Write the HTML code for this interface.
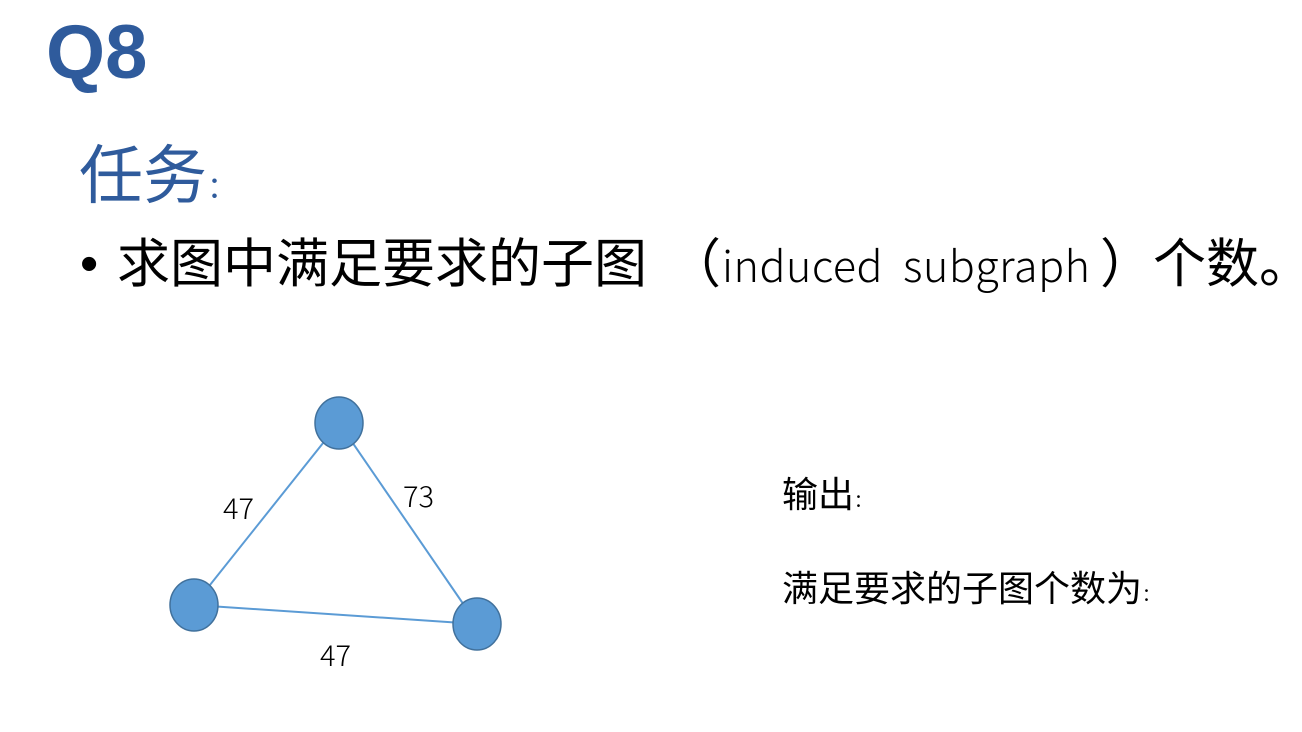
<!DOCTYPE html>
<html><head><meta charset="utf-8"><style>
body{margin:0;width:1302px;height:732px;background:#fff;position:relative;overflow:hidden;font-family:"Liberation Sans","Noto Sans CJK SC",sans-serif}
.a{position:absolute;white-space:nowrap;line-height:1}
</style></head><body>
<div class="a" style="left:46px;top:15px;font-size:76px;font-weight:bold;color:#2f5b9c;letter-spacing:0px">Q8</div>
<div class="a" style="left:79px;top:144px;font-size:64px;color:#2f5b9c">任务<span style="font-size:30px">：</span></div>
<div class="a" style="left:80px;top:238px;font-size:52px;color:#000">•</div>
<div class="a" style="left:117px;top:238px;font-size:53px;color:#000">求图中满足要求的子图</div>
<div class="a" style="left:668px;top:238px;font-size:53px;color:#000">（</div>
<div class="a" style="left:722px;top:243px;font-size:43px;color:#000;letter-spacing:0.5px;font-family:'Noto Sans CJK SC','Liberation Sans',sans-serif;font-weight:300">induced&nbsp; subgraph</div>
<div class="a" style="left:1100px;top:238px;font-size:53px;color:#000">）个数。</div>
<svg class="a" style="left:0;top:0" width="1302" height="732">
<g stroke="#5b9bd5" stroke-width="2">
<line x1="339" y1="423" x2="194" y2="605"/><line x1="339" y1="423" x2="477" y2="624"/><line x1="194" y1="605" x2="477" y2="624"/>
</g>
<g fill="#5b9bd5" stroke="#41719c" stroke-width="1.5">
<ellipse cx="339" cy="423" rx="24" ry="26"/><ellipse cx="194" cy="605" rx="24" ry="26"/><ellipse cx="477" cy="624" rx="24" ry="26"/>
</g>
</svg>
<div class="a" style="left:223px;top:493px;font-size:29px;font-family:'Noto Sans CJK SC',sans-serif;font-weight:300">47</div>
<div class="a" style="left:403px;top:481px;font-size:29px;font-family:'Noto Sans CJK SC',sans-serif;font-weight:300">73</div>
<div class="a" style="left:320px;top:640px;font-size:29px;font-family:'Noto Sans CJK SC',sans-serif;font-weight:300">47</div>
<div class="a" style="left:782px;top:477px;font-size:36px">输出<span style="font-size:18px">：</span></div>
<div class="a" style="left:782px;top:571px;font-size:36px">满足要求的子图个数为<span style="font-size:18px">：</span></div>
</body></html>
